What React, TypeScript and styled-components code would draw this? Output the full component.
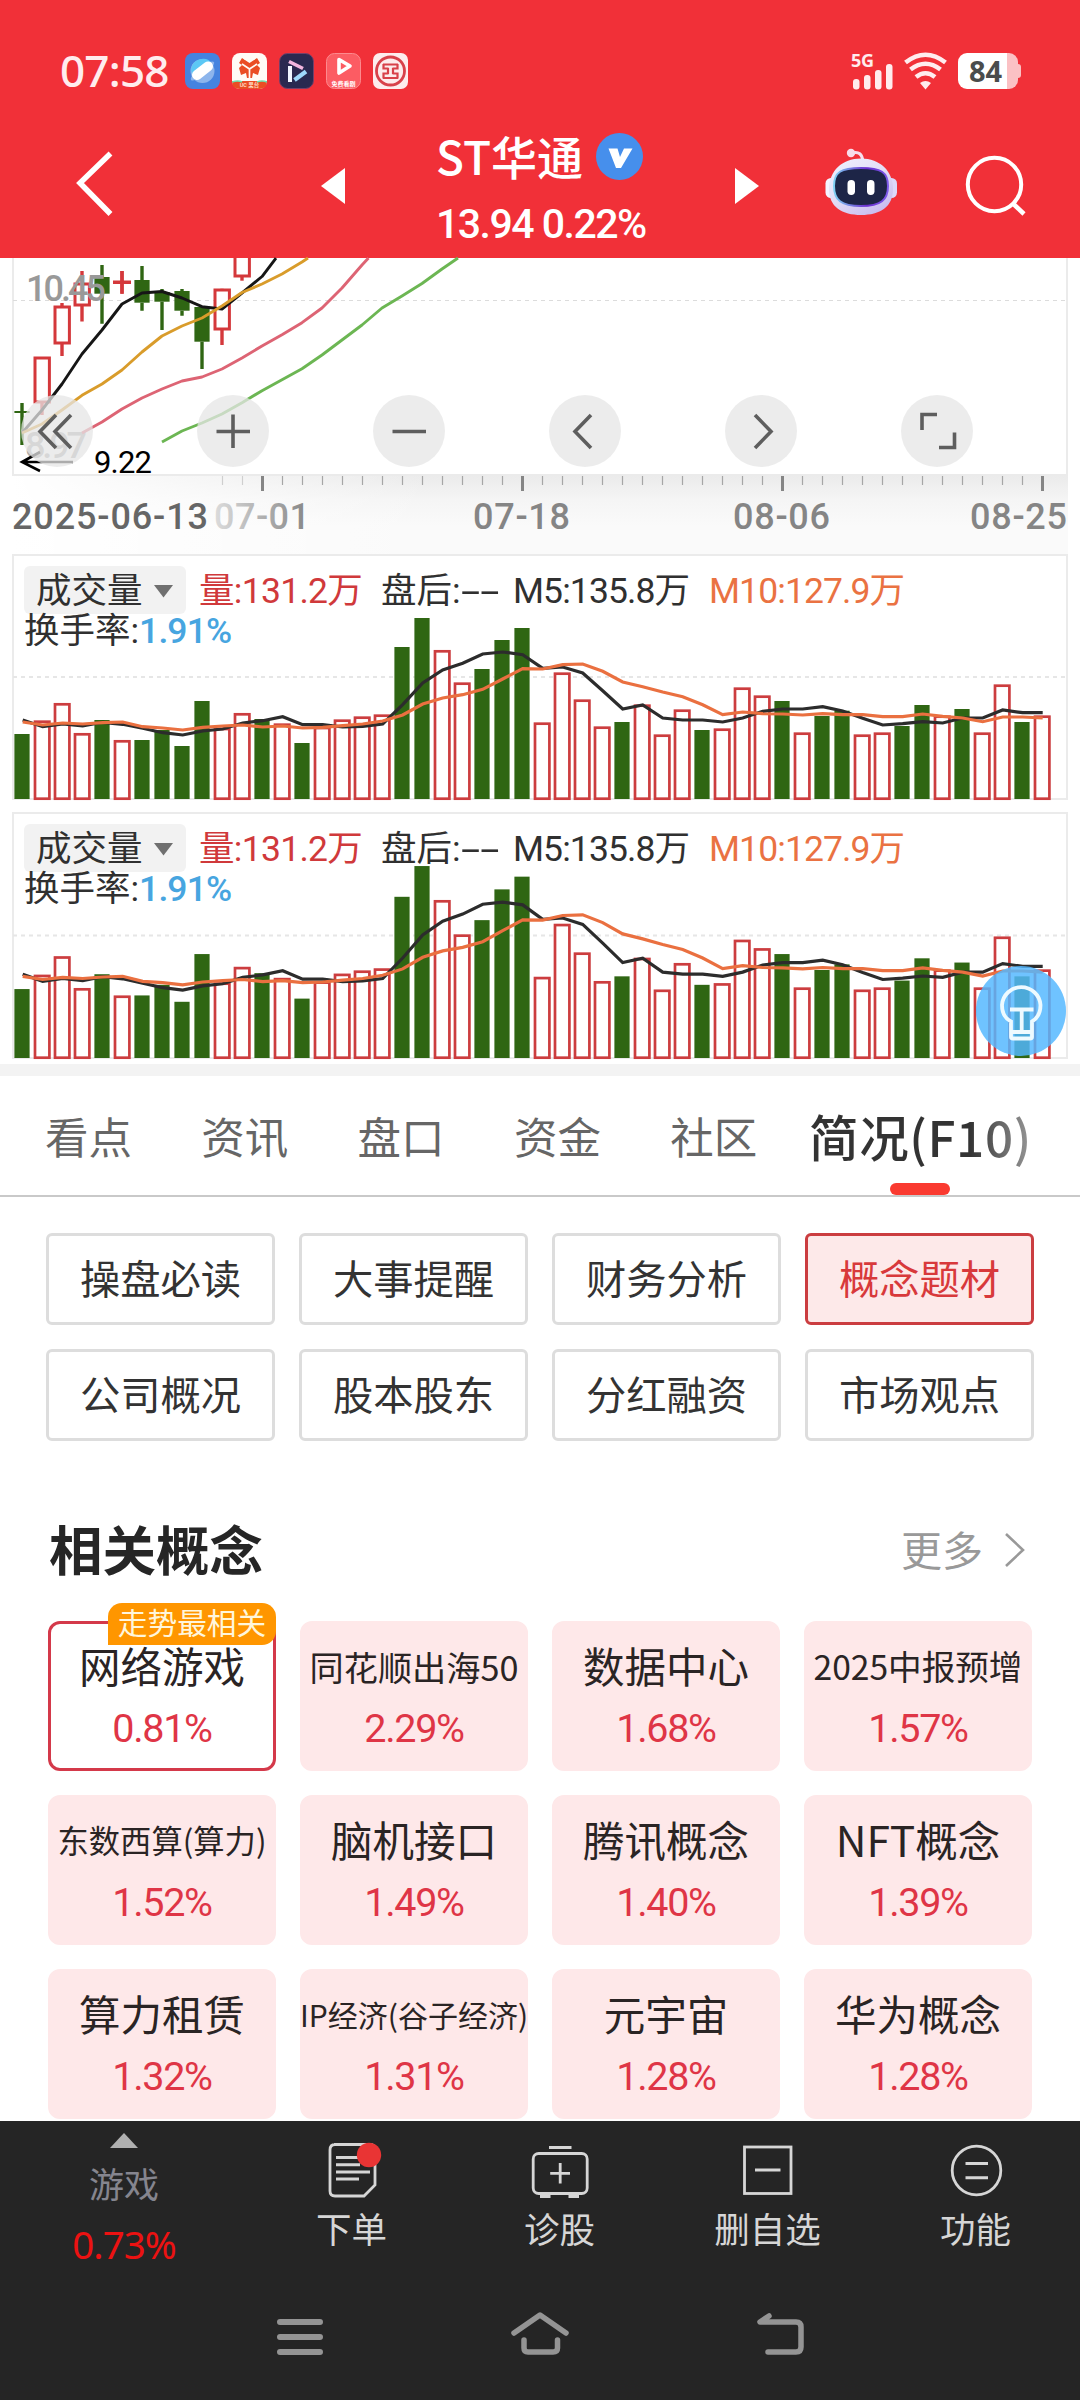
import React from 'react';
import styled, { createGlobalStyle, css } from 'styled-components';

const FONT = `Roboto, "Noto Sans CJK SC", sans-serif`;
const HAN = `"Noto Sans CJK SC", Roboto, sans-serif`;

const GlobalStyle = createGlobalStyle`
  * { box-sizing: border-box; }
  body { margin: 0; background: #fff; font-family: ${FONT}; }
  svg { overflow: visible; }
`;

const Screen = styled.div`
  width: 1080px;
  height: 2400px;
  overflow: hidden;
  display: flex;
  flex-direction: column;
  background: #fff;
`;

/* ---------- top area ---------- */

const TopArea = styled.header`
  height: 258px;
  flex: none;
  background: #f13038;
  color: #fff;
  display: flex;
  flex-direction: column;
`;

const StatusBar = styled.div`
  height: 128px;
  padding: 13px 62px 0 60px;
  display: flex;
  align-items: center;
`;

const Clock = styled.span`
  width: 125px;
  font: 500 44px/50px "Noto Sans", sans-serif;
  letter-spacing: -0.8px;
  color: #ffecee;
  margin-top: -2px;
`;

const AppIcons = styled.div`
  display: flex;
  gap: 12px;
  svg { display: block; width: 35px; height: 36px; overflow: hidden; }
`;

const StatusRight = styled.div`
  margin-left: auto;
  display: flex;
  align-items: center;
  gap: 9px;
`;

const Battery = styled.div`
  width: 60px;
  height: 36px;
  border-radius: 9px;
  position: relative;
  background: linear-gradient(90deg, #fff 49px, #fbc1c4 49px);
  color: #4a4c4c;
  font: 700 29px/36px "Noto Sans", sans-serif;
  padding-left: 11px;
  &::after {
    content: '';
    position: absolute;
    right: -3px;
    top: 11px;
    width: 3px;
    height: 14px;
    border-radius: 0 3px 3px 0;
    background: #fbc1c4;
  }
`;

const TitleBar = styled.div`
  flex: 1;
  display: grid;
  grid-template-columns: 189px 247px 210px 179px 141px 114px;
  svg { display: block; }
`;

const Slot = styled.div<{ $top?: number; $left?: number }>`
  padding-top: ${(p) => p.$top ?? 0}px;
  padding-left: ${(p) => p.$left ?? 0}px;
`;

const StockTitle = styled.div`
  white-space: nowrap;
`;

const StockName = styled.div`
  display: flex;
  align-items: center;
  height: 57px;
  font: 500 46px/54px ${HAN};
  gap: 11px;
`;

const NameText = styled.span<{ $w: number }>`
  width: ${(p) => p.$w}px;
  margin-top: -3px;
`;

const StockPrice = styled.div`
  font: 500 41px/60px ${FONT};
  letter-spacing: -1.5px;
  margin-top: 9px;
`;

/* ---------- chart area ---------- */

const KChart = styled.section`
  height: 218px;
  flex: none;
  position: relative;
  svg { display: block; }
`;

const ChartTools = styled.div`
  position: absolute;
  left: 21px;
  right: 107px;
  bottom: 9px;
  display: flex;
  justify-content: space-between;
`;

const ToolButton = styled.button`
  width: 72px;
  height: 72px;
  padding: 0;
  border: 0;
  border-radius: 50%;
  background: rgba(230, 230, 230, 0.75);
`;

const AxisStrip = styled.div`
  height: 78px;
  flex: none;
  margin: 0 12px;
  background:
    linear-gradient(90deg, #fff 0, rgba(255, 255, 255, 0) 420px),
    linear-gradient(180deg, #ebebeb 0, #f5f5f5 24px, #fafafa 50px);
  svg { display: block; }
`;

const VolumePanel = styled.section<{ $h: number }>`
  height: ${(p) => p.$h}px;
  margin-bottom: ${(p) => (p.$h === 246 ? 12 : 5)}px;
  flex: none;
  position: relative;
  svg { display: block; }
`;

const Legend = styled.div`
  position: absolute;
  left: 24px;
  top: 12px;
  color: #303030;
  font: 400 35.5px/50px ${FONT};
  white-space: nowrap;
`;

const LegendRow = styled.div`
  display: flex;
  align-items: center;
  height: 48px;
`;

const Selector = styled.div`
  width: 162px;
  height: 48px;
  padding: 2px 0 0 12px;
  border-radius: 6px;
  background: #f2f2f2;
  display: flex;
  align-items: center;
  gap: 11px;
`;

const LegendItem = styled.span<{ $c?: string; $w: number; $ml?: number; $ls?: number }>`
  width: ${(p) => p.$w}px;
  padding-top: 2px;
  margin-left: ${(p) => p.$ml ?? 0}px;
  color: ${(p) => p.$c ?? '#303030'};
  letter-spacing: ${(p) => p.$ls ?? 0}px;
`;

const Dashes = styled.span`
  display: inline-block;
  transform: scaleX(1.95);
  transform-origin: 0 50%;
`;

const Turnover = styled.div`
  line-height: 34px;
  b { font-weight: 500; color: #47a5e0; letter-spacing: -0.9px; }
`;

const HintBubble = styled.button`
  position: absolute;
  right: 14px;
  bottom: 3px;
  width: 90px;
  height: 90px;
  padding: 0;
  border: 0;
  border-radius: 50%;
  background: rgba(84, 183, 255, 0.84);
`;

/* ---------- tabs ---------- */

const Tabs = styled.nav`
  flex: none;
  height: 133px;
  border-top: 12px solid #f3f3f3;
  border-bottom: 2px solid #c9c9c9;
  padding-left: 45px;
  display: flex;
  align-items: stretch;
`;

const Tab = styled.div<{ $active?: boolean }>`
  width: 156.3px;
  padding-top: 28px;
  font: 400 43.5px/64px ${HAN};
  color: #666;
  white-space: nowrap;
  ${(p) =>
    p.$active &&
    css`
      width: 226px;
      margin-left: -19px;
      font: 500 49.5px/64px ${HAN};
      color: #333;
      display: flex;
      flex-direction: column;
      align-items: center;
      justify-content: space-between;
      &::after {
        content: '';
        width: 60px;
        height: 12px;
        border-radius: 6px;
        background: #fa3a30;
      }
    `}
`;

const FadeText = styled.span`
  letter-spacing: 0.6px;
  background: linear-gradient(90deg, #333 72%, #999 100%);
  -webkit-background-clip: text;
  background-clip: text;
  color: transparent;
`;

/* ---------- profile ---------- */

const Shortcuts = styled.div`
  flex: none;
  margin: 36px 46px 0;
  display: grid;
  grid-template-columns: repeat(4, 229px);
  grid-auto-rows: 92px;
  gap: 24px;
`;

const Shortcut = styled.div<{ $active?: boolean }>`
  display: flex;
  justify-content: center;
  border: 3px solid ${(p) => (p.$active ? '#cb3d40' : '#dddddd')};
  border-radius: 6px;
  background: ${(p) => (p.$active ? '#fde9e9' : '#fff')};
  color: ${(p) => (p.$active ? '#d8393b' : '#333')};
  font: 400 40.3px/81px ${HAN};
`;

const SectionHead = styled.div`
  flex: none;
  height: 80px;
  margin: 67px 54px 0 49px;
  display: flex;
  justify-content: space-between;
  align-items: center;
`;

const Heading = styled.h2`
  margin: 0;
  font: 700 53.5px/80px ${HAN};
  color: #262626;
`;

const More = styled.div`
  display: flex;
  align-items: center;
  gap: 21px;
  font: 400 41px/60px ${HAN};
  color: #999;
  svg { margin-top: 3px; }
`;

const Cards = styled.div`
  flex: none;
  margin: 33px 48px 0;
  height: 500px;
  display: grid;
  grid-template-columns: repeat(4, 228px);
  grid-auto-rows: 150px;
  gap: 24px;
`;

const Card = styled.div<{ $picked?: boolean }>`
  position: relative;
  display: flex;
  flex-direction: column;
  align-items: center;
  border-radius: 12px;
  border: 3px solid ${(p) => (p.$picked ? '#d4394a' : '#fee8e9')};
  background: ${(p) => (p.$picked ? '#fff' : '#fee8e9')};
  white-space: nowrap;
`;

const CardName = styled.div<{ $size: number }>`
  height: 46px;
  margin: ${(p) => (p.$size > 40 ? 18 : 19)}px 0 ${(p) => (p.$size > 40 ? 21 : 20)}px;
  font: 400 ${(p) => p.$size}px/46px ${HAN};
  color: #2a2424;
`;

const CardRate = styled.div`
  font: 400 39.5px/40px ${FONT};
  letter-spacing: -1.3px;
  color: #df3546;
`;

const Badge = styled.div`
  position: absolute;
  right: -3px;
  top: -21px;
  width: 168px;
  height: 42px;
  border-radius: 14px 14px 14px 0;
  background: #ff9600;
  color: #fff6dc;
  font: 400 29.7px/38px ${HAN};
  text-align: center;
`;

/* ---------- bottom ---------- */

const BottomArea = styled.footer`
  flex: none;
  height: 279px;
  background: #252525;
`;

const ActionBar = styled.div`
  height: 160px;
  display: grid;
  grid-template-columns: 248px repeat(4, 208px);
`;

const IndexTicker = styled.div`
  display: flex;
  flex-direction: column;
  align-items: center;
  padding-top: 12px;
  svg { display: block; }
`;

const IndexName = styled.div`
  font: 400 35px/44px ${HAN};
  color: #85858f;
  margin-top: 13px;
`;

const IndexRate = styled.div`
  font: 400 38.5px/50px "Noto Sans", sans-serif;
  letter-spacing: -1px;
  color: #ec1212;
  margin-top: 14px;
`;

const Action = styled.div`
  display: flex;
  flex-direction: column;
  align-items: center;
  padding: 19px 1px 0 0;
  font: 400 35.5px/52px ${HAN};
  color: #d6d6d6;
  svg { display: block; margin-bottom: 2px; }
`;

const SystemNav = styled.div`
  height: 119px;
  padding: 25px 264px 0;
  display: flex;
  justify-content: space-between;
  svg { display: block; }
`;

/* ---------- chart data ---------- */

const STEP = 20;
const X0 = 22;
const cx = (i: number) => X0 + i * STEP;

// g: falling (filled), r: rising (hollow), value is height above the base line
const VOLUMES: [string, number][] = [
  ['g', 65], ['r', 78.3], ['r', 95.7], ['r', 65.7], ['g', 79], ['r', 58.7], ['g', 59], ['g', 69], ['g', 53], ['g', 98],
  ['r', 71], ['r', 85.7], ['g', 80], ['r', 75.3], ['g', 56], ['r', 72], ['r', 79.3], ['r', 82.3], ['r', 84.3], ['g', 152],
  ['g', 181], ['r', 148.7], ['r', 116.3], ['g', 130], ['g', 159], ['g', 171], ['r', 76.3], ['r', 126.3], ['r', 99.3], ['r', 72.3],
  ['g', 77], ['r', 94.3], ['r', 64.3], ['r', 89.3], ['g', 69], ['r', 70.3], ['r', 111.3], ['r', 103.3], ['g', 98], ['r', 66.3],
  ['g', 83], ['g', 88.3], ['r', 64.3], ['r', 66.3], ['g', 73], ['g', 94], ['r', 83.3], ['g', 90], ['r', 66.3], ['r', 114.3],
  ['g', 77], ['r', 83.3],
];
const M5 = [513, 533, 525, 531, 520, 526, 538, 551, 558, 546, 540, 522, 515, 503, 527, 527, 534, 532, 525, 467, 402, 363, 343, 315, 309, 317, 358, 354, 372, 425, 480, 468, 507, 513, 513, 519, 507, 487, 480, 480, 473, 486, 508, 528, 524, 518, 522, 507, 507, 483, 491, 491];
const M10 = [519, 528, 522, 525, 521, 519, 533, 537, 543, 535, 531, 528, 534, 531, 537, 535, 530, 525, 516, 498, 465, 447, 437, 421, 390, 359, 360, 347, 345, 367, 399, 413, 429, 443, 467, 497, 489, 494, 495, 498, 494, 497, 497, 503, 503, 495, 502, 507, 518, 504, 504, 507];

function VolumeChart({ height, scale }: { height: number; scale: number }) {
  const base = height - 1;
  const line = (vals: number[]) =>
    vals.map((v, i) => `${cx(i) + 0.7},${(base - ((750 - v) / 3) * scale).toFixed(1)}`).join(' ');
  return (
    <svg width="1080" height={height}>
      <path d={`M13 ${height}V1H1067V${height - 1}H13`} fill="none" stroke="#ebebeb" strokeWidth="2" />
      <path d={`M13 ${height / 2}H1067`} stroke="#e6e6e6" strokeWidth="2" strokeDasharray="4 4" />
      {VOLUMES.map(([kind, v], i) => {
        const h = v * scale;
        return kind === 'g' ? (
          <rect key={i} x={cx(i) - 7.6} y={base - h} width="15.2" height={h} fill="#2f6613" />
        ) : (
          <rect key={i} x={cx(i) - 7} y={base - h + 1} width="14.4" height={h - 1.3} fill="#fff" stroke="#cc3d3f" strokeWidth="2.7" />
        );
      })}
      <polyline points={line(M5)} fill="none" stroke="#2c2c2c" strokeWidth="3.2" />
      <polyline points={line(M10)} fill="none" stroke="#ea7040" strokeWidth="3.2" />
    </svg>
  );
}

// kind, body top, body bottom, high, low
const CANDLES: [string, number, number, number, number][] = [
  ['g', 411, 413, 403, 445], ['r', 358, 402, 357, 415], ['r', 307, 343, 303, 356], ['r', 284, 305, 271, 321.5],
  ['g', 277, 293.7, 265, 323.7], ['x', 281, 283.5, 271, 293.7], ['g', 280, 302.7, 266, 310.7], ['g', 292, 301.7, 289, 330],
  ['g', 291, 310.7, 289, 315.7], ['g', 307, 341.7, 307, 369], ['r', 290, 329, 288.7, 345], ['r', 259, 276, 259, 280.7],
];

function CandleChart() {
  return (
    <svg width="1080" height="218" viewBox="0 258 1080 218">
      <path d="M13 258V475H1067V258" fill="none" stroke="#ebebeb" strokeWidth="2" />
      <path d="M13 300.5H1067" stroke="#dcdcdc" strokeWidth="1.2" strokeDasharray="4 4" />
      {CANDLES.map(([k, a, b, hi, lo], i) => {
        const color = k === 'g' ? '#2f6613' : '#d4383b';
        return (
          <g key={i} stroke={color} fill={color}>
            <path d={`M${cx(i)} ${hi}V${a}M${cx(i)} ${b}V${lo}`} strokeWidth="3.4" />
            {k === 'r' && i < 11 && (
              <rect x={cx(i) - 7} y={a} width="14.4" height={b - a} fill="#fff" strokeWidth="3" />
            )}
            {k === 'r' && i === 11 && (
              <path d={`M${cx(i) - 7} 258V${b}H${cx(i) + 7.4}V258`} fill="#fff" strokeWidth="3" />
            )}
            {k !== 'r' && (
              <rect x={cx(i) - (k === 'x' ? 8.5 : 7.6)} y={a} width={k === 'x' ? 17 : 15.2} height={b - a} stroke={k === 'x' ? color : 'none'} strokeWidth="1" />
            )}
            {k === 'x' && <path d={`M${cx(i)} ${hi}V${lo}`} strokeWidth="3.4" />}
          </g>
        );
      })}
      <g fill="#999" fontFamily="Roboto, sans-serif" fontSize="36" fontWeight="500">
        <text x="26" y="300.5" textLength="80">10.45</text>
        <text x="25" y="458" textLength="62" fill="#aaa">8.97</text>
      </g>
      <g fill="none" strokeWidth="2.9" strokeLinejoin="round">
        <path d="M22 433L42 410L62 384L82 354L102 330L122 304L142 293L162 291.5L182 298L202 306.7L222 309L242 293L262 276.5L276 258" stroke="#161616" />
        <path d="M22 433L42 424L62 410L82 395.3L102 384L122 370L142 352L162 336L182 326L202 318L222 306L242 292.5L262 284L282 274L302 262L308 258" stroke="#d99c2b" />
        <path d="M82 433L102 422L122 409L142 398L162 389L182 381L202 377L222 369L242 358L262 346L282 334.7L302 322.7L322 308L342 288L362 265L368.500 258" stroke="#dd6474" />
        <path d="M162 442L182 431L202 423L222 414L242 402.7L262 390.7L282 379.7L302 368.7L322 355L342 340L362 325L382 308L402 296L422 283.5L442 269L458 258" stroke="#6cb653" />
      </g>
      <path d="M73 462H22M40 452L22 462L40 471" fill="none" stroke="#000" strokeWidth="2.6" />
      <text x="94" y="472.5" textLength="58" fontFamily="Roboto, sans-serif" fontSize="31" fill="#000">9.22</text>
    </svg>
  );
}

const TOOL_PATHS = [
  'M35 20L19 36.5L35 53M50 20L34 36.5L50 53',
  'M36 19.5V53M19.5 36.5H53',
  'M19.5 36.5H53',
  'M42 20L26 36.5L42 53',
  'M30 20L46 36.5L30 53',
  'M36 19.5H21V35M53.5 37.5V52.5H38',
];

const DATES: { x: number; w: number; t: string; fill: string }[] = [
  { x: 12, w: 196, t: '2025-06-13', fill: '#666' },
  { x: 214, w: 96, t: '07-01', fill: 'url(#fade)' },
  { x: 473, w: 97, t: '07-18', fill: '#858585' },
  { x: 733, w: 97, t: '08-06', fill: '#858585' },
  { x: 970, w: 97, t: '08-25', fill: '#858585' },
];

function TimeAxis() {
  const ticks = Array.from({ length: 42 }, (_, i) => i + 10);
  return (
    <svg width="1056" height="78" viewBox="12 476 1056 78">
      <defs>
        <linearGradient id="fade">
          <stop offset="0" stopColor="#dcdcdc" />
          <stop offset="1" stopColor="#858585" />
        </linearGradient>
      </defs>
      {ticks.map((i) => {
        const big = (i - 12) % 13 === 0;
        return (
          <path
            key={i}
            d={`M${cx(i) + 0.5} 476V${big ? 491 : 485}`}
            stroke={big ? '#858585' : i < 12 ? '#cfcfcf' : '#a6a6a6'}
            strokeWidth={big ? 3 : 1.2}
          />
        );
      })}
      <g fontFamily="Roboto, sans-serif" fontSize="36" fontWeight="500">
        {DATES.map((d) => (
          <text key={d.t} x={d.x} y="529" textLength={d.w} fill={d.fill}>{d.t}</text>
        ))}
      </g>
    </svg>
  );
}

function VolumeLegend() {
  return (
    <Legend>
      <LegendRow>
        <Selector>
          成交量
          <svg width="19" height="13"><path d="M0 0H19L9.5 12.5Z" fill="#707070" /></svg>
        </Selector>
        <LegendItem $c="#d0393b" $w={168} $ml={13} $ls={-0.7}>量:131.2万</LegendItem>
        <LegendItem $w={132} $ml={14}>盘后:<Dashes>--</Dashes></LegendItem>
        <LegendItem $w={196} $ls={-0.9}>M5:135.8万</LegendItem>
        <LegendItem $c="#ea7242" $w={196} $ls={-0.9}>M10:127.9万</LegendItem>
      </LegendRow>
      <Turnover>换手率:<b>1.91%</b></Turnover>
    </Legend>
  );
}

const SHORTCUTS = ['操盘必读', '大事提醒', '财务分析', '概念题材', '公司概况', '股本股东', '分红融资', '市场观点'];

const CONCEPTS: [string, string, number][] = [
  ['网络游戏', '0.81%', 41.5], ['同花顺出海50', '2.29%', 34.2], ['数据中心', '1.68%', 41.5], ['2025中报预增', '1.57%', 33.6],
  ['东数西算(算力)', '1.52%', 31.3], ['脑机接口', '1.49%', 41.5], ['腾讯概念', '1.40%', 41.5], ['NFT概念', '1.39%', 42.5],
  ['算力租赁', '1.32%', 41.5], ['IP经济(谷子经济)', '1.31%', 30], ['元宇宙', '1.28%', 41.5], ['华为概念', '1.28%', 41.5],
];

/* ---------- icons ---------- */

function StatusAppIcons() {
  return (
    <AppIcons>
      <svg viewBox="0 0 35 36">
        <rect width="35" height="36" rx="8" fill="#4583df" />
        <circle cx="17.5" cy="18" r="12" fill="#8db5ec" />
        <path d="M6 17A12 12 0 0 1 27 10L8 24Z" fill="#5cc8f5" />
        <ellipse cx="17.5" cy="18" rx="14.5" ry="4" transform="rotate(-38 17.5 18)" fill="#8db5ec" />
        <rect x="5.5" y="12.7" width="24" height="10" rx="5" transform="rotate(-38 17.5 17.7)" fill="#fff" />
      </svg>
      <svg viewBox="0 0 35 36">
        <rect width="35" height="36" rx="8" fill="#fffaf6" />
        <path d="M10 5L17.5 10L25 5L28 10L25 12L28 15L26 22L21 20L20 25H15L14 20L9 22L7 15L10 12L7 10Z" fill="#ea4d24" />
        <path d="M17.5 25V16L10 11M17.5 16L25 11M12 6L17.5 3L23 6" stroke="#fffaf6" strokeWidth="1.7" fill="none" />
        <path d="M0 28H35V29Q35 36 27 36H8Q0 36 0 29Z" fill="#ea4d24" />
        <path d="M0 29Q6 27 10 29M25 29Q30 27 35 29" stroke="#6fe0b0" strokeWidth="1.4" fill="none" />
        <text x="17.5" y="34" fontSize="5.5" textAnchor="middle" fill="#ffd9c0" fontWeight="700">UC 果台</text>
      </svg>
      <svg viewBox="0 0 35 36">
        <rect x=".5" y=".5" width="34" height="35" rx="8" fill="#2a2950" stroke="#74406a" />
        <path d="M11 13V29" stroke="#f2f6ff" strokeWidth="4" />
        <path d="M10 8.5L24 15.5" stroke="#f3b6df" strokeWidth="3.6" />
        <path d="M15.5 27L27 18.5" stroke="#9fd8fb" strokeWidth="4.2" />
      </svg>
      <svg viewBox="0 0 35 36">
        <rect x=".5" y=".5" width="34" height="35" rx="8" fill="#fc5c63" stroke="#fd8a8e" />
        <path d="M13 6.5L24 13L13 20Z" fill="none" stroke="#fff" strokeWidth="3.6" strokeLinejoin="round" />
        <text x="17.5" y="33" fontSize="6" textAnchor="middle" fill="#fff" fontWeight="700">免费看剧</text>
      </svg>
      <svg viewBox="0 0 35 36">
        <rect width="35" height="36" rx="7" fill="#fdeced" />
        <circle cx="17.5" cy="18" r="14" fill="none" stroke="#d8414a" strokeWidth="2.8" />
        <path d="M10 11.500H25M10 25H25M10.500 11V15.500H15.500M24.500 11V15.500H19.500M10.500 25.500V20.500H15.500M24.500 25.500V20.500H19.500M15 15V21M20 15V21" fill="none" stroke="#d8414a" strokeWidth="2.2" />
      </svg>
    </AppIcons>
  );
}

function SignalIcon() {
  return (
    <svg width="44" height="38" viewBox="0 0 44 38">
      <text x="1" y="14.5" fontSize="18" fontWeight="700" fontFamily="Noto Sans, sans-serif" fill="#ffecee" textLength="23">5G</text>
      <g fill="#ffecee">
        <rect x="3" y="27" width="6.5" height="10.5" rx="3" />
        <rect x="14" y="23" width="6.5" height="14.5" rx="3" />
        <rect x="25" y="18" width="6.5" height="19.5" rx="3" />
        <rect x="36" y="12" width="6.5" height="25.5" rx="3" />
      </g>
    </svg>
  );
}

function WifiIcon() {
  return (
    <svg width="46" height="38" viewBox="0 0 46 38">
      <g fill="none" stroke="#ffecee" strokeWidth="4.6">
        <path d="M2.5 10.5Q22.5 -5 42.5 10.5" />
        <path d="M7.5 17.5Q22.5 6 37.5 17.5" />
        <path d="M13 25Q22.5 17.5 32 25" />
      </g>
      <path d="M17 31Q22.5 27 28 31L22.5 37.5Z" fill="#ffecee" />
    </svg>
  );
}

function RobotIcon() {
  return (
    <svg width="74" height="70" viewBox="825 149 74 70">
      <defs>
        <linearGradient id="shell" x1="0" y1="0" x2="0.7" y2="1">
          <stop offset="0" stopColor="#eef3ff" />
          <stop offset="0.55" stopColor="#e3dcf5" />
          <stop offset="1" stopColor="#c9bdf0" />
        </linearGradient>
        <linearGradient id="rim">
          <stop offset="0" stopColor="#7fd0f2" />
          <stop offset="0.6" stopColor="#6b2fd0" />
          <stop offset="1" stopColor="#7c5ae8" />
        </linearGradient>
      </defs>
      <path d="M852 154Q862 151 863 163" fill="none" stroke="#f6dfee" strokeWidth="3" />
      <circle cx="851" cy="154" r="4.2" fill="#f8dcea" />
      <rect x="825.5" y="179" width="12" height="20" rx="5.5" fill="#f4f4ff" />
      <rect x="885" y="179" width="12" height="20" rx="5.5" fill="#ddd8fa" />
      <path d="M861 159.5C880 159.5 893 172 893 190C893 208 880 216 861 216C842 216 829 208 829 190C829 172 842 159.5 861 159.5Z" fill="url(#shell)" />
      <path d="M861 169C881 169 888 173 888 187C888 201 881 207 861 207C841 207 834 201 834 187C834 173 841 169 861 169Z" fill="#1d2547" stroke="url(#rim)" strokeWidth="2" />
      <rect x="847.5" y="181" width="7.5" height="15" rx="3.7" fill="#fff" />
      <rect x="867" y="181" width="7.5" height="15" rx="3.7" fill="#fff" />
    </svg>
  );
}

function DocIcon() {
  return (
    <svg width="60" height="60" viewBox="322 2141 60 60">
      <path d="M334 2145.5H370Q375 2145.5 375 2151V2186L364 2197H335Q330 2197 330 2192V2151Q330 2145.5 335 2145.5Z" fill="none" stroke="#d6d6d6" strokeWidth="2.8" />
      <path d="M336 2158.5H360M336 2165.7H360M336 2173H370M336 2180H359" stroke="#d6d6d6" strokeWidth="3" />
      <circle cx="369" cy="2156" r="12.2" fill="#e93434" />
    </svg>
  );
}

function ClinicIcon() {
  return (
    <svg width="60" height="60" viewBox="529.5 2141 60 60">
      <rect x="532.7" y="2154.5" width="54" height="40" rx="5.5" fill="none" stroke="#d6d6d6" strokeWidth="2.8" />
      <path d="M548.5 2148.5H571M559.7 2164V2184.5M549.7 2174.3H569.5" stroke="#d6d6d6" strokeWidth="2.8" />
      <path d="M539.5 2197H550M568 2197H578.5" stroke="#d6d6d6" strokeWidth="4" />
    </svg>
  );
}

function RemoveIcon() {
  return (
    <svg width="60" height="60" viewBox="737.5 2141 60 60">
      <rect x="744" y="2148" width="46.5" height="46.5" fill="none" stroke="#d6d6d6" strokeWidth="2.8" />
      <path d="M754.5 2171H780" stroke="#d6d6d6" strokeWidth="3" />
    </svg>
  );
}

function FeatureIcon() {
  return (
    <svg width="60" height="60" viewBox="945 2141 60 60">
      <circle cx="975.5" cy="2171.5" r="24.3" fill="none" stroke="#d6d6d6" strokeWidth="2.8" />
      <path d="M964.5 2164.5H987M964.5 2178.7H987" stroke="#d6d6d6" strokeWidth="3" />
    </svg>
  );
}

const ACTIONS = [
  { label: '下单', icon: <DocIcon /> },
  { label: '诊股', icon: <ClinicIcon /> },
  { label: '删自选', icon: <RemoveIcon /> },
  { label: '功能', icon: <FeatureIcon /> },
];

export default function App() {
  return (
    <Screen>
      <GlobalStyle />
      <TopArea>
        <StatusBar>
          <Clock>07:58</Clock>
          <StatusAppIcons />
          <StatusRight>
            <SignalIcon />
            <WifiIcon />
            <Battery>84</Battery>
          </StatusRight>
        </StatusBar>
        <TitleBar>
          <Slot $top={24} $left={74}>
            <svg width="42" height="62"><path d="M36.5 0.5L6 30L36.5 61" transform="translate(0 1)" fill="none" stroke="#fff" strokeWidth="5.5" /></svg>
          </Slot>
          <Slot $top={40} $left={132}>
            <svg width="24" height="36"><path d="M24 0V36L0 18Z" fill="#fff" /></svg>
          </Slot>
          <StockTitle>
            <StockName>
              <NameText $w={149}>ST华通</NameText>
              <svg width="47" height="47" viewBox="0 0 47 47">
                <circle cx="23.5" cy="23.5" r="23.5" fill="#468fec" />
                <path d="M12.5 15.5H21.5L24 24L28 15.5H36.5L25 35H20Z" fill="#fff" />
              </svg>
            </StockName>
            <StockPrice>13.94 0.22%</StockPrice>
          </StockTitle>
          <Slot $top={40} $left={89}>
            <svg width="24" height="36"><path d="M0 0V36L24 18Z" fill="#fff" /></svg>
          </Slot>
          <Slot $top={20}>
            <RobotIcon />
          </Slot>
          <Slot $top={26}>
            <svg width="62" height="64" viewBox="966 154 62 64">
              <circle cx="994.5" cy="184.5" r="26.7" fill="none" stroke="#fff" strokeWidth="4" />
              <path d="M1013.5 204L1024 214" stroke="#fff" strokeWidth="4.5" />
            </svg>
          </Slot>
        </TitleBar>
      </TopArea>

      <KChart>
        <CandleChart />
        <ChartTools>
          {TOOL_PATHS.map((d) => (
            <ToolButton key={d}>
              <svg width="72" height="72"><path d={d} fill="none" stroke="#5e5e5e" strokeWidth="3.6" /></svg>
            </ToolButton>
          ))}
        </ChartTools>
      </KChart>
      <AxisStrip>
        <TimeAxis />
      </AxisStrip>

      <VolumePanel $h={246}>
        <VolumeChart height={246} scale={1} />
        <VolumeLegend />
      </VolumePanel>
      <VolumePanel $h={247}>
        <VolumeChart height={247} scale={1.0605} />
        <VolumeLegend />
        <HintBubble>
          <svg width="90" height="90" viewBox="0 0 90 90" fill="none" stroke="#eefaff" strokeWidth="3.8">
            <path d="M35 71V55.5C28 52 26 45 26 39A19.3 19.3 0 0 1 64.5 39C64.5 45 62 52 56 55.5V71Q56 72.5 54 72.5H37Q35 72.5 35 71Z" />
            <path d="M34 43.5H57.5M45.7 43.5V65M35 66H56" />
          </svg>
        </HintBubble>
      </VolumePanel>

      <Tabs>
        {['看点', '资讯', '盘口', '资金', '社区'].map((t) => (
          <Tab key={t}>{t}</Tab>
        ))}
        <Tab $active><FadeText>简况(F10)</FadeText></Tab>
      </Tabs>

      <Shortcuts>
        {SHORTCUTS.map((s) => (
          <Shortcut key={s} $active={s === '概念题材'}>{s}</Shortcut>
        ))}
      </Shortcuts>

      <SectionHead>
        <Heading>相关概念</Heading>
        <More>
          更多
          <svg width="22" height="36"><path d="M2 2L19 18L2 34" fill="none" stroke="#999" strokeWidth="2.6" /></svg>
        </More>
      </SectionHead>

      <Cards>
        {CONCEPTS.map(([name, rate, size], i) => (
          <Card key={name} $picked={i === 0}>
            <CardName $size={size}>{name}</CardName>
            <CardRate>{rate}</CardRate>
            {i === 0 && <Badge>走势最相关</Badge>}
          </Card>
        ))}
      </Cards>

      <BottomArea>
        <ActionBar>
          <IndexTicker>
            <svg width="28" height="15"><path d="M14 0L28 15H0Z" fill="#b0b0b0" /></svg>
            <IndexName>游戏</IndexName>
            <IndexRate>0.73%</IndexRate>
          </IndexTicker>
          {ACTIONS.map((a) => (
            <Action key={a.label}>
              {a.icon}
              {a.label}
            </Action>
          ))}
        </ActionBar>
        <SystemNav>
          <svg width="72" height="60" viewBox="264 2306 72 60">
            <path d="M280 2322H320M280 2337H320M280 2352H320" stroke="#949494" strokeWidth="6" strokeLinecap="round" />
          </svg>
          <svg width="72" height="60" viewBox="504 2306 72 60">
            <path d="M514 2333L540 2315L566 2333M524 2340V2348Q524 2352 528 2352H553Q557.5 2352 557.5 2348V2340" fill="none" stroke="#949494" strokeWidth="5.5" strokeLinecap="round" strokeLinejoin="round" />
          </svg>
          <svg width="72" height="60" viewBox="744 2306 72 60">
            <path d="M769 2316L760 2322H796Q801 2322 801 2327V2347Q801 2352 796 2352H768" fill="none" stroke="#949494" strokeWidth="5.5" strokeLinecap="round" strokeLinejoin="round" />
          </svg>
        </SystemNav>
      </BottomArea>
    </Screen>
  );
}
